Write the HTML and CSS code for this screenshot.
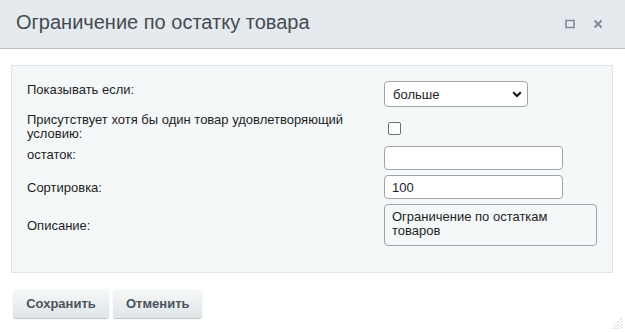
FILE: index.html
```html
<!DOCTYPE html>
<html lang="ru">
<head>
<meta charset="utf-8">
<title>Ограничение по остатку товара</title>
<link rel="stylesheet" href="styles.css">
</head>
<body>
<div class="dialog">
  <div class="head">
    <span class="title">Ограничение по остатку товара</span>
    <div class="tools">
      <svg class="tool" width="10" height="10" viewBox="0 0 10 10"><rect x="1" y="1.5" width="8" height="7" fill="none" stroke="#7f8a95" stroke-width="1.5"/></svg>
      <svg class="tool" width="10" height="10" viewBox="0 0 10 10"><path d="M1.5 1.5 L8.5 8.5 M8.5 1.5 L1.5 8.5" stroke="#7f8a95" stroke-width="1.8" fill="none"/></svg>
    </div>
  </div>
  <div class="body">
    <div class="panel">
      <div class="form">
        <label class="lbl lbl-top">Показывать если:</label>
        <div class="ctl">
          <span class="select-wrap">
            <select class="select"><option>больше</option></select>
            <svg class="chev" width="10" height="7" viewBox="0 0 10 7"><path d="M1.2 1.2 L5 5 L8.8 1.2" stroke="#111" stroke-width="2" fill="none"/></svg>
          </span>
        </div>

        <label class="lbl lbl-multi">Присутствует хотя бы один товар удовлетворяющий условию:</label>
        <div class="ctl ctl-check"><input type="checkbox" class="check"></div>

        <label class="lbl lbl-top">остаток:</label>
        <div class="ctl"><input type="text" class="field"></div>

        <label class="lbl lbl-mid">Сортировка:</label>
        <div class="ctl"><input type="text" class="field" value="100"></div>

        <label class="lbl lbl-mid">Описание:</label>
        <div class="ctl"><textarea class="area">Ограничение по остаткам товаров</textarea></div>
      </div>
    </div>
    <div class="buttons">
      <button class="btn btn-save">Сохранить</button>
      <button class="btn btn-cancel">Отменить</button>
    </div>
  </div>
  <svg class="grip" width="12" height="12" viewBox="0 0 12 12">
    <path d="M11 3 L3 11 M11 6 L6 11 M11 9 L9 11 M11 0 L0 11" stroke="#b5bcc2" stroke-width="1" stroke-dasharray="1 1" fill="none"/>
  </svg>
</div>
</body>
</html>
```
FILE: styles.css
```css
html, body {
  margin: 0;
  padding: 0;
  background: #ffffff;
}

.dialog {
  position: relative;
  width: 625px;
  height: 332px;
  font-family: "Liberation Sans", Arial, sans-serif;
  color: #1e1e1e;
  box-sizing: border-box;
}

.head {
  height: 48px;
  background: #e4eaed;
  border-bottom: 1px solid #b9c0c4;
  display: flex;
  align-items: center;
  justify-content: space-between;
  padding: 0 22px 0 16px;
}

.title {
  font-size: 20px;
  color: #454b52;
  margin-top: -3px;
}

.tools {
  display: flex;
  align-items: center;
  gap: 18px;
}

.tool {
  display: block;
}

.body {
  padding: 16px 12px 0 11px;
}

.panel {
  background: #f5f8f9;
  border: 1px solid #dde5e8;
  padding: 15px 15px 26px 15px;
}

.form {
  display: grid;
  grid-template-columns: 357px 1fr;
  row-gap: 5px;
  font-size: 13px;
}

.lbl {
  line-height: 15px;
}

.lbl-top {
  align-self: start;
  padding-top: 1px;
}

.lbl-multi {
  align-self: start;
  line-height: 14px;
  padding-top: 1px;
  padding-right: 20px;
}

.lbl-mid {
  align-self: center;
}

.ctl {
  display: flex;
  align-items: flex-start;
}

.ctl-check {
  align-items: center;
}

.select-wrap {
  position: relative;
  display: inline-block;
}

.select {
  appearance: none;
  -webkit-appearance: none;
  width: 144px;
  height: 26px;
  margin: 0;
  padding: 0 24px 0 8px;
  font-family: "Liberation Sans", Arial, sans-serif;
  font-size: 13px;
  color: #1e1e1e;
  background: #ffffff;
  border: 1px solid #9ea4a8;
  border-radius: 4px;
  box-sizing: border-box;
}

.chev {
  position: absolute;
  right: 6px;
  top: 10px;
  pointer-events: none;
}

.check {
  appearance: none;
  -webkit-appearance: none;
  width: 13px;
  height: 13px;
  margin: 3px 0 0 4px;
  background: #ffffff;
  border: 1px solid #6a7074;
  border-radius: 2px;
  box-sizing: border-box;
}

.field {
  width: 179px;
  height: 24px;
  margin: 0;
  padding: 0 7px;
  font-family: "Liberation Sans", Arial, sans-serif;
  font-size: 13px;
  color: #1e1e1e;
  background: #ffffff;
  border: 1px solid #9ea4a8;
  border-radius: 4px;
  box-sizing: border-box;
  outline: none;
}

.area {
  width: 213px;
  height: 42px;
  margin: 0;
  padding: 5px 7px 4px 7px;
  font-family: "Liberation Sans", Arial, sans-serif;
  font-size: 13px;
  line-height: 14px;
  color: #1e1e1e;
  background: #f5f8f9;
  border: 1px solid #9ea4a8;
  border-radius: 4px;
  box-sizing: border-box;
  resize: none;
  overflow: hidden;
  display: block;
}

.buttons {
  display: flex;
  gap: 4px;
  padding: 15px 0 0 2px;
}

.btn {
  height: 30px;
  margin: 0;
  padding: 0 13px;
  font-family: "Liberation Sans", Arial, sans-serif;
  font-size: 13px;
  font-weight: bold;
  color: #4b535c;
  background: linear-gradient(#f7f9fa, #dfe5e8);
  border: none;
  border-radius: 3px;
  box-shadow: 0 1px 1px rgba(0, 0, 0, 0.25), inset 0 1px 0 #ffffff;
}

.btn-save {
  width: 96px;
}

.btn-cancel {
  width: 89px;
}

.grip {
  position: absolute;
  right: 2px;
  bottom: 2px;
}
```
